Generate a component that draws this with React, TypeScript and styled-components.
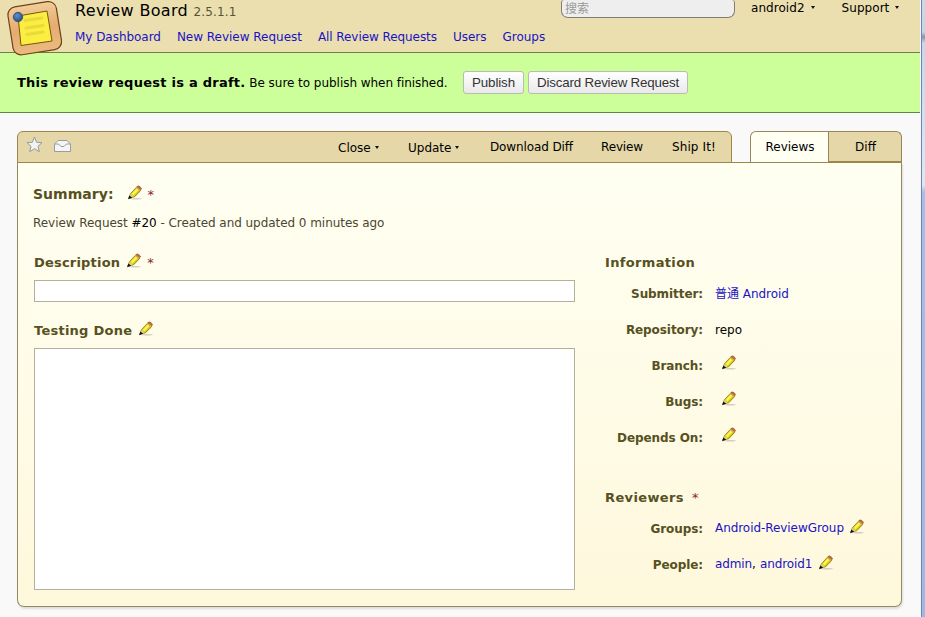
import React from 'react';
import styled, { createGlobalStyle } from 'styled-components';

const Global = createGlobalStyle`
  * { box-sizing: border-box; }
  html, body { margin: 0; padding: 0; }
  body {
    font-family: "DejaVu Sans", "Noto Sans CJK SC", sans-serif;
    font-size: 12px;
    color: #000;
    background: #f9f9f9;
    overflow: hidden;
  }
`;

const Window = styled.div`
  display: grid;
  grid-template-columns: 920px 5px;
  width: 925px;
  height: 617px;
  overflow: hidden;
`;

const Page = styled.div`
  display: flex;
  flex-direction: column;
  background: #f9f9f9;
  min-width: 0;
`;

const WindowEdge = styled.div`
  border-left: 1px solid #f4f6fa;
  background: linear-gradient(90deg, #7286a8 0, #7286a8 1px, transparent 1px),
    linear-gradient(#c9d9ea 0, #c4d6ea 32px, #8494ac 37px, #c6d8ed 43px, #dce8f5 185px, #a5bfe8 192px, #9db9e4 617px);
`;

const Header = styled.header`
  display: flex;
  height: 53px;
  flex: none;
  background: #ebdfaf;
  border-bottom: 1px solid #77794f;
`;

const Logo = styled.svg`
  flex: none;
  width: 58px;
  height: 58px;
  margin-left: 6px;
  position: relative;
  z-index: 1;
`;

const HeaderMain = styled.div`
  width: 486px;
  margin-left: 11px;
`;

const Title = styled.h1`
  margin: 0;
  height: 27px;
  padding-top: 1px;
  line-height: 20px;
  font-size: 16px;
  font-weight: 400;
  letter-spacing: 0.32px;
  white-space: nowrap;
`;

const Version = styled.span`
  font-size: 12px;
  letter-spacing: 0.15px;
  color: #575336;
`;

const Nav = styled.nav`
  display: flex;
  gap: 16px;
  line-height: 20px;
  white-space: nowrap;
`;

const Link = styled.a<{ $ls?: number }>`
  color: #2012c4;
  text-decoration: none;
  letter-spacing: ${p => p.$ls ?? 0}px;
`;

const Search = styled.div`
  width: 174px;
  height: 18px;
  padding: 0 3px;
  line-height: 16px;
  border: 1px solid #827e76;
  border-top: 0;
  border-radius: 3px 3px 7px 7px;
  background: #eeeeee;
  color: #999;
  font-family: "Noto Sans CJK SC", sans-serif;
`;

const Account = styled.div<{ $gap: number }>`
  display: flex;
  align-items: center;
  height: 15px;
  gap: 5px;
  letter-spacing: 0.05px;
  margin-left: ${p => p.$gap}px;
`;

const Caret = styled.span`
  width: 0;
  height: 0;
  border: 2.5px solid transparent;
  border-top: 3px solid #111;
  border-bottom: 0;
  margin-left: 1px;
`;

const Banner = styled.section`
  display: flex;
  align-items: center;
  height: 60px;
  flex: none;
  padding-left: 17px;
  background: #ccff99;
  border-bottom: 1px solid #5d893e;
  white-space: nowrap;
`;

const BannerText = styled.p`
  margin: 0 0 1px;
  width: 446px;
  letter-spacing: -0.04px;
`;

const BannerLead = styled.strong`
  font-size: 13px;
  letter-spacing: 0.25px;
`;

const Button = styled.button<{ $w: number }>`
  width: ${p => p.$w}px;
  height: 23px;
  margin: 0 4px 0 0;
  padding: 0;
  font: 13.33px "Liberation Sans", sans-serif;
  letter-spacing: ${p => (p.$w > 100 ? -0.18 : -0.1)}px;
  color: #333;
  border: 1px solid #b9bcb0;
  border-radius: 3px;
  background: linear-gradient(#ffffff, #e9e9e9);
  white-space: nowrap;
`;

const Request = styled.main`
  width: 885px;
  margin: 18px 0 0 17px;
`;

const Bars = styled.div`
  display: flex;
  justify-content: space-between;
  height: 32px;
  margin-bottom: -1px;
  position: relative;
`;

const Toolbar = styled.div`
  display: flex;
  width: 715px;
  height: 32px;
  background: #e5d7a7;
  border: 1px solid #a0854a;
  border-radius: 6px 6px 0 0;
`;

const Flags = styled.div`
  display: flex;
  width: 320px;
  padding: 4px 0 0 8px;
  gap: 11px;
`;

const Action = styled.div<{ $w: number; $drop?: boolean; $ls?: number }>`
  display: flex;
  align-items: center;
  gap: 3px;
  flex: none;
  width: ${p => p.$w}px;
  height: ${p => (p.$drop ? 31 : 29)}px;
  letter-spacing: ${p => p.$ls ?? 0}px;
  white-space: nowrap;
`;

const Tabs = styled.div`
  display: flex;
  width: 152px;
`;

const Tab = styled.div<{ $active?: boolean }>`
  width: ${p => (p.$active ? 79 : 73)}px;
  height: ${p => (p.$active ? 31 : 32)}px;
  padding-left: 1px;
  line-height: 30px;
  text-align: center;
  background: ${p => (p.$active ? '#fffff2' : '#e5d7a7')};
  border: 1px solid #96875a;
  border-left-width: ${p => (p.$active ? 1 : 0)}px;
  border-bottom: ${p => (p.$active ? '0' : '2px solid #a0854a')};
  border-radius: ${p => (p.$active ? '6px 0 0 0' : '0 6px 0 0')};
`;

const Panel = styled.div`
  display: grid;
  grid-template-columns: 572px 1fr;
  grid-template-rows: 83px 1fr;
  height: 445px;
  padding: 0 15px;
  border: 1px solid #948962;
  border-top-color: #a0854a;
  border-radius: 0 0 7px 7px;
  background: linear-gradient(#fffff2, #fef8dc);
  box-shadow: 1px 2px 2px #dedede;
`;

const Intro = styled.div`
  grid-column: 1 / -1;
  padding-top: 21px;
`;

const Heading = styled.h2<{ $size?: number; $ls?: number; $top?: number }>`
  display: flex;
  align-items: center;
  height: 20px;
  margin: ${p => p.$top ?? 0}px 0 0;
  font-size: ${p => p.$size ?? 13}px;
  letter-spacing: ${p => p.$ls ?? 0}px;
  color: #575022;
  white-space: nowrap;
`;

const PencilSvg = styled.svg<{ $ml: number }>`
  flex: none;
  width: 16px;
  height: 16px;
  margin: -3px 0 0 ${p => p.$ml}px;
`;

const Star = styled.span<{ $ml: number }>`
  margin-left: ${p => p.$ml}px;
  font-size: 13px;
  font-weight: 400;
  color: #8e1c2c;
  letter-spacing: 0;
`;

const Meta = styled.p`
  margin: 9px 0 0;
  line-height: 20px;
  letter-spacing: -0.05px;
  color: #4a4632;
`;

const RequestId = styled.span`
  color: #000;
`;

const Main = styled.div`
  padding: 6px 0 0 1px;
`;

const Field = styled.div<{ $h: number }>`
  width: 541px;
  height: ${p => p.$h}px;
  margin-top: 8px;
  background: #fff;
  border: 1px solid #b3b09c;
`;

const Side = styled.div`
  padding-top: 6px;
`;

const Row = styled.div`
  display: grid;
  grid-template-columns: 98px 1fr;
  column-gap: 12px;
  height: 36px;
  white-space: nowrap;
`;

const Rows = styled.div<{ $top: number }>`
  margin-top: ${p => p.$top}px;
`;

const Label = styled.div`
  text-align: right;
  font-weight: 700;
  line-height: 20px;
  letter-spacing: -0.08px;
  color: #575022;
`;

const Value = styled.div<{ $lift?: number }>`
  display: flex;
  align-items: center;
  height: ${p => 20 - (p.$lift ?? 0) * 2}px;
`;

const Cjk = styled.span`
  font-family: "Noto Sans CJK SC", sans-serif;
  margin-right: 4px;
  line-height: 16px;
`;

const Separator = styled.span`
  margin-right: 4px;
`;

function Pencil({ ml }: { ml: number }) {
  return (
    <PencilSvg $ml={ml} viewBox="0 0 16 16">
      <ellipse cx="9" cy="13.800" rx="6" ry=".8" fill="#77745f" opacity=".35" />
      <path d="M2 13 3.400 8.800 9.400 2.300 13.600 5.500 7 12Z" fill="#e3d51b" stroke="#857c20" strokeWidth=".8" />
      <path d="m5 8.800 5-5.300 1.500 1.200-5.200 5.500z" fill="#fff65c" />
      <path d="m7 11.400 5.600-5.700.8.6L7.300 12.500z" fill="#a39818" />
      <path d="m9.700 2 1-1c.7-.7 4.200 1.800 3.700 2.800l-1.300 1.700z" fill="#c26c32" stroke="#80501f" strokeWidth=".7" />
      <path d="m8.900 2.900.9-1 4 3.200-1 1z" fill="#d8ab5b" />
      <path d="m3.400 9.200 3.300 2.700L2 13.600z" fill="#ddd188" />
      <path d="m2.300 10.600 3 2.200L1 14.200z" fill="#111" />
    </PencilSvg>
  );
}

export default function App() {
  return (
    <Window>
      <Global />
      <Page>
        <Header>
          <Logo viewBox="0 0 58 58">
            <defs>
              <linearGradient id="cork" x1="0" y1="0" x2="0" y2="1">
                <stop offset="0" stopColor="#f2cd99" />
                <stop offset=".5" stopColor="#e5ac70" />
                <stop offset="1" stopColor="#ebba80" />
              </linearGradient>
              <radialGradient id="pin" cx=".4" cy=".35" r=".7">
                <stop offset="0" stopColor="#648fc2" />
                <stop offset="1" stopColor="#214d8c" />
              </radialGradient>
            </defs>
            <rect x="4.2" y="4" width="49" height="48.5" rx="8" transform="rotate(-9 28.5 28)" fill="url(#cork)" stroke="#6f4218" strokeWidth="1.2" />
            <path d="m12 16 29-5 5 30-31 4.500Z" fill="#fbee40" stroke="#78570f" strokeWidth="1" />
            <path d="m19 20.500 17-2.500M20 28l17-2.500M21 34.500l16-2.500" stroke="#e9da3c" strokeWidth="3" strokeLinecap="round" />
            <circle cx="12" cy="17" r="4.7" fill="url(#pin)" stroke="#274573" strokeWidth=".8" />
          </Logo>
          <HeaderMain>
            <Title>Review Board <Version>2.5.1.1</Version></Title>
            <Nav>
              <Link $ls={-0.04}>My Dashboard</Link>
              <Link $ls={-0.02}>New Review Request</Link>
              <Link $ls={-0.07}>All Review Requests</Link>
              <Link $ls={-0.02}>Users</Link>
              <Link>Groups</Link>
            </Nav>
          </HeaderMain>
          <Search>搜索</Search>
          <Account $gap={16}>android2 <Caret /></Account>
          <Account $gap={27}>Support <Caret /></Account>
        </Header>
        <Banner>
          <BannerText><BannerLead>This review request is a draft.</BannerLead> Be sure to publish when finished.</BannerText>
          <Button $w={61}>Publish</Button>
          <Button $w={160}>Discard Review Request</Button>
        </Banner>
        <Request>
          <Bars>
            <Toolbar>
              <Flags>
                <svg width="17" height="17" viewBox="0 0 17 17">
                  <path d="m8.500 1 2.200 5.300 5.300.4-4 3.600 1.300 5.400-4.800-3-4.800 3L5 10.300 1 6.700l5.300-.4z" fill="#f2f2f0" stroke="#96999a" />
                </svg>
                <svg width="17" height="17" viewBox="0 0 17 17">
                  <path d="M.5 8 4 4.500h9L16.500 8v7.500H.5z" fill="#f5f5f5" stroke="#999b9d" />
                  <path d="M1 8h3.500L7 10.500h3L12.500 8H16" fill="none" stroke="#999b9d" />
                </svg>
              </Flags>
              <Action $w={70} $drop>Close <Caret /></Action>
              <Action $w={82} $drop>Update <Caret /></Action>
              <Action $w={111} $ls={-0.12}>Download Diff</Action>
              <Action $w={71} $ls={-0.15}>Review</Action>
              <Action $w={58} $ls={0.1}>Ship It!</Action>
            </Toolbar>
            <Tabs>
              <Tab $active>Reviews</Tab>
              <Tab>Diff</Tab>
            </Tabs>
          </Bars>
          <Panel>
            <Intro>
              <Heading $size={14} $ls={0.03}>Summary:<Pencil ml={13} /><Star $ml={5}>*</Star></Heading>
              <Meta>Review Request <RequestId>#20</RequestId> - Created and updated 0 minutes ago</Meta>
            </Intro>
            <Main>
              <Heading $ls={0.2}>Description<Pencil ml={6} /><Star $ml={5}>*</Star></Heading>
              <Field $h={22} />
              <Heading $top={18} $ls={0.25}>Testing Done<Pencil ml={6} /></Heading>
              <Field $h={242} />
            </Main>
            <Side>
              <Heading $ls={0.34}>Information</Heading>
              <Rows $top={12}>
                <Row><Label>Submitter:</Label><Value $lift={1}><Link $ls={-0.08}><Cjk>普通</Cjk>Android</Link></Value></Row>
                <Row><Label>Repository:</Label><Value>repo</Value></Row>
                <Row><Label>Branch:</Label><Value $lift={2}><Pencil ml={6} /></Value></Row>
                <Row><Label>Bugs:</Label><Value $lift={2}><Pencil ml={6} /></Value></Row>
                <Row><Label>Depends On:</Label><Value $lift={2}><Pencil ml={6} /></Value></Row>
              </Rows>
              <Heading $top={23} $ls={0.37}>Reviewers<Star $ml={8}>*</Star></Heading>
              <Rows $top={12}>
                <Row><Label>Groups:</Label><Value $lift={1}><Link $ls={-0.06}>Android-ReviewGroup</Link><Pencil ml={5} /></Value></Row>
                <Row><Label>People:</Label><Value $lift={1}><Link $ls={-0.1}>admin</Link><Separator>,</Separator><Link $ls={-0.1}>android1</Link><Pencil ml={6} /></Value></Row>
              </Rows>
            </Side>
          </Panel>
        </Request>
      </Page>
      <WindowEdge />
    </Window>
  );
}
